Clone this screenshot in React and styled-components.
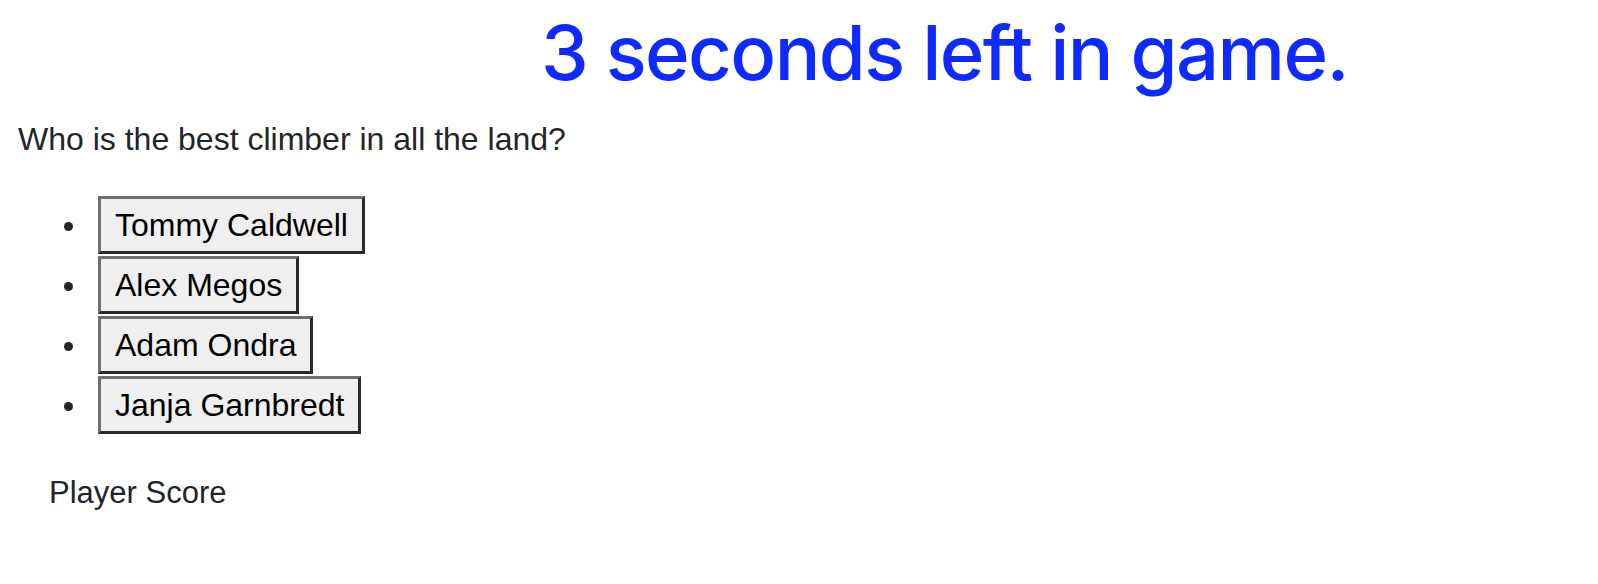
import React from 'react'
import styled, { createGlobalStyle } from 'styled-components'

const answers = ['Tommy Caldwell', 'Alex Megos', 'Adam Ondra', 'Janja Garnbredt']

const GlobalStyle = createGlobalStyle`
body {
  margin: 0;
  background: #ffffff;
  font-family: "Liberation Sans", Arial, sans-serif;
  color: #212529;
}
`

const App = () => {
  return (
    <Body>
      <GlobalStyle />
      <Timer>3 seconds left in game.</Timer>
      <Question>Who is the best climber in all the land?</Question>
      <Answers>
        {answers.map((a) => (
          <Answer key={a}>
            <AnswerButton>{a}</AnswerButton>
          </Answer>
        ))}
      </Answers>
      <Score>Player Score</Score>
    </Body>
  )
}

const Body = styled.div`
width: 100%;
min-height: 584px;
display: flex;
flex-direction: column;
`

const Timer = styled.h1`
margin: 0;
padding: 5px 0 0 541px;
font-family: Inter, "Liberation Sans", sans-serif;
font-size: 76px;
line-height: 95px;
font-weight: 500;
letter-spacing: -1.6px;
color: #0f2aff;
`

const Question = styled.p`
margin: 19px 0 0 18px;
font-size: 32px;
line-height: 40px;
`

const Answers = styled.ul`
list-style: none;
margin: 37px 0 0 0;
padding: 0 0 0 98px;
display: flex;
flex-direction: column;
gap: 2px;
`

const Answer = styled.li`
position: relative;
display: flex;
align-items: center;
&::before {
  content: '';
  position: absolute;
  left: -34px;
  top: 50%;
  width: 9px;
  height: 9px;
  margin-top: -3px;
  border-radius: 50%;
  background: #212529;
}
`

const AnswerButton = styled.button`
font-family: "Liberation Sans", Arial, sans-serif;
font-size: 32px;
line-height: 38px;
color: #000;
background: #efefef;
padding: 7px 14px;
border-width: 3px;
border-style: solid;
border-color: #6f6f6f #2a2a2a #2a2a2a #6f6f6f;
border-radius: 0;
cursor: pointer;
`

const Score = styled.p`
margin: 39px 0 0 49px;
font-size: 31px;
line-height: 40px;
`

export default App
